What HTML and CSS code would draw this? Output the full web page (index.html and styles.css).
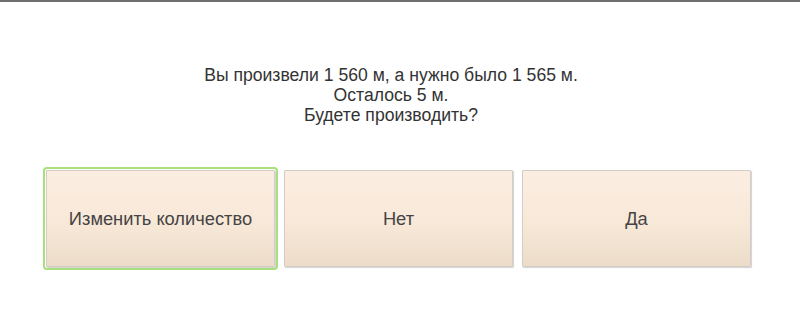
FILE: index.html
```html
<!DOCTYPE html>
<html lang="ru">
<head>
<meta charset="utf-8">
<title>Вопрос</title>
<link rel="stylesheet" href="styles.css">
</head>
<body>
<div class="page">
  <div class="message">
    <div>Вы произвели 1 560 м, а нужно было 1 565 м.</div>
    <div>Осталось 5 м.</div>
    <div>Будете производить?</div>
  </div>
  <div class="buttons">
    <button class="btn focused">Изменить количество</button>
    <button class="btn">Нет</button>
    <button class="btn">Да</button>
  </div>
</div>
</body>
</html>
```
FILE: styles.css
```css
html, body {
  margin: 0;
  padding: 0;
  background: #ffffff;
}
body {
  width: 800px;
  height: 313px;
  overflow: hidden;
  font-family: "Liberation Sans", Arial, sans-serif;
  color: #333333;
}
.page {
  border-top: 2px solid #6e6e6e;
  height: 311px;
  box-sizing: border-box;
  display: flex;
  flex-direction: column;
}
.message {
  margin-top: 63px;
  text-align: center;
  font-size: 17.6px;
  line-height: 20px;
  padding-right: 18px;
}
.buttons {
  display: flex;
  gap: 9px;
  margin-top: 45px;
  padding-left: 46px;
}
.btn {
  width: 229px;
  height: 97px;
  box-sizing: border-box;
  border: 1px solid #d4cdc6;
  border-radius: 1px;
  background: linear-gradient(to bottom, #fbeee1 0%, #f8e8d8 55%, #ecdcc9 100%);
  box-shadow: 1px 1px 1px rgba(0,0,0,0.18);
  font-family: "Liberation Sans", Arial, sans-serif;
  font-size: 18.3px;
  color: #444444;
  padding: 0;
}
.btn.focused {
  outline: 2px solid #a8e07c;
  outline-offset: 1px;
}
```
